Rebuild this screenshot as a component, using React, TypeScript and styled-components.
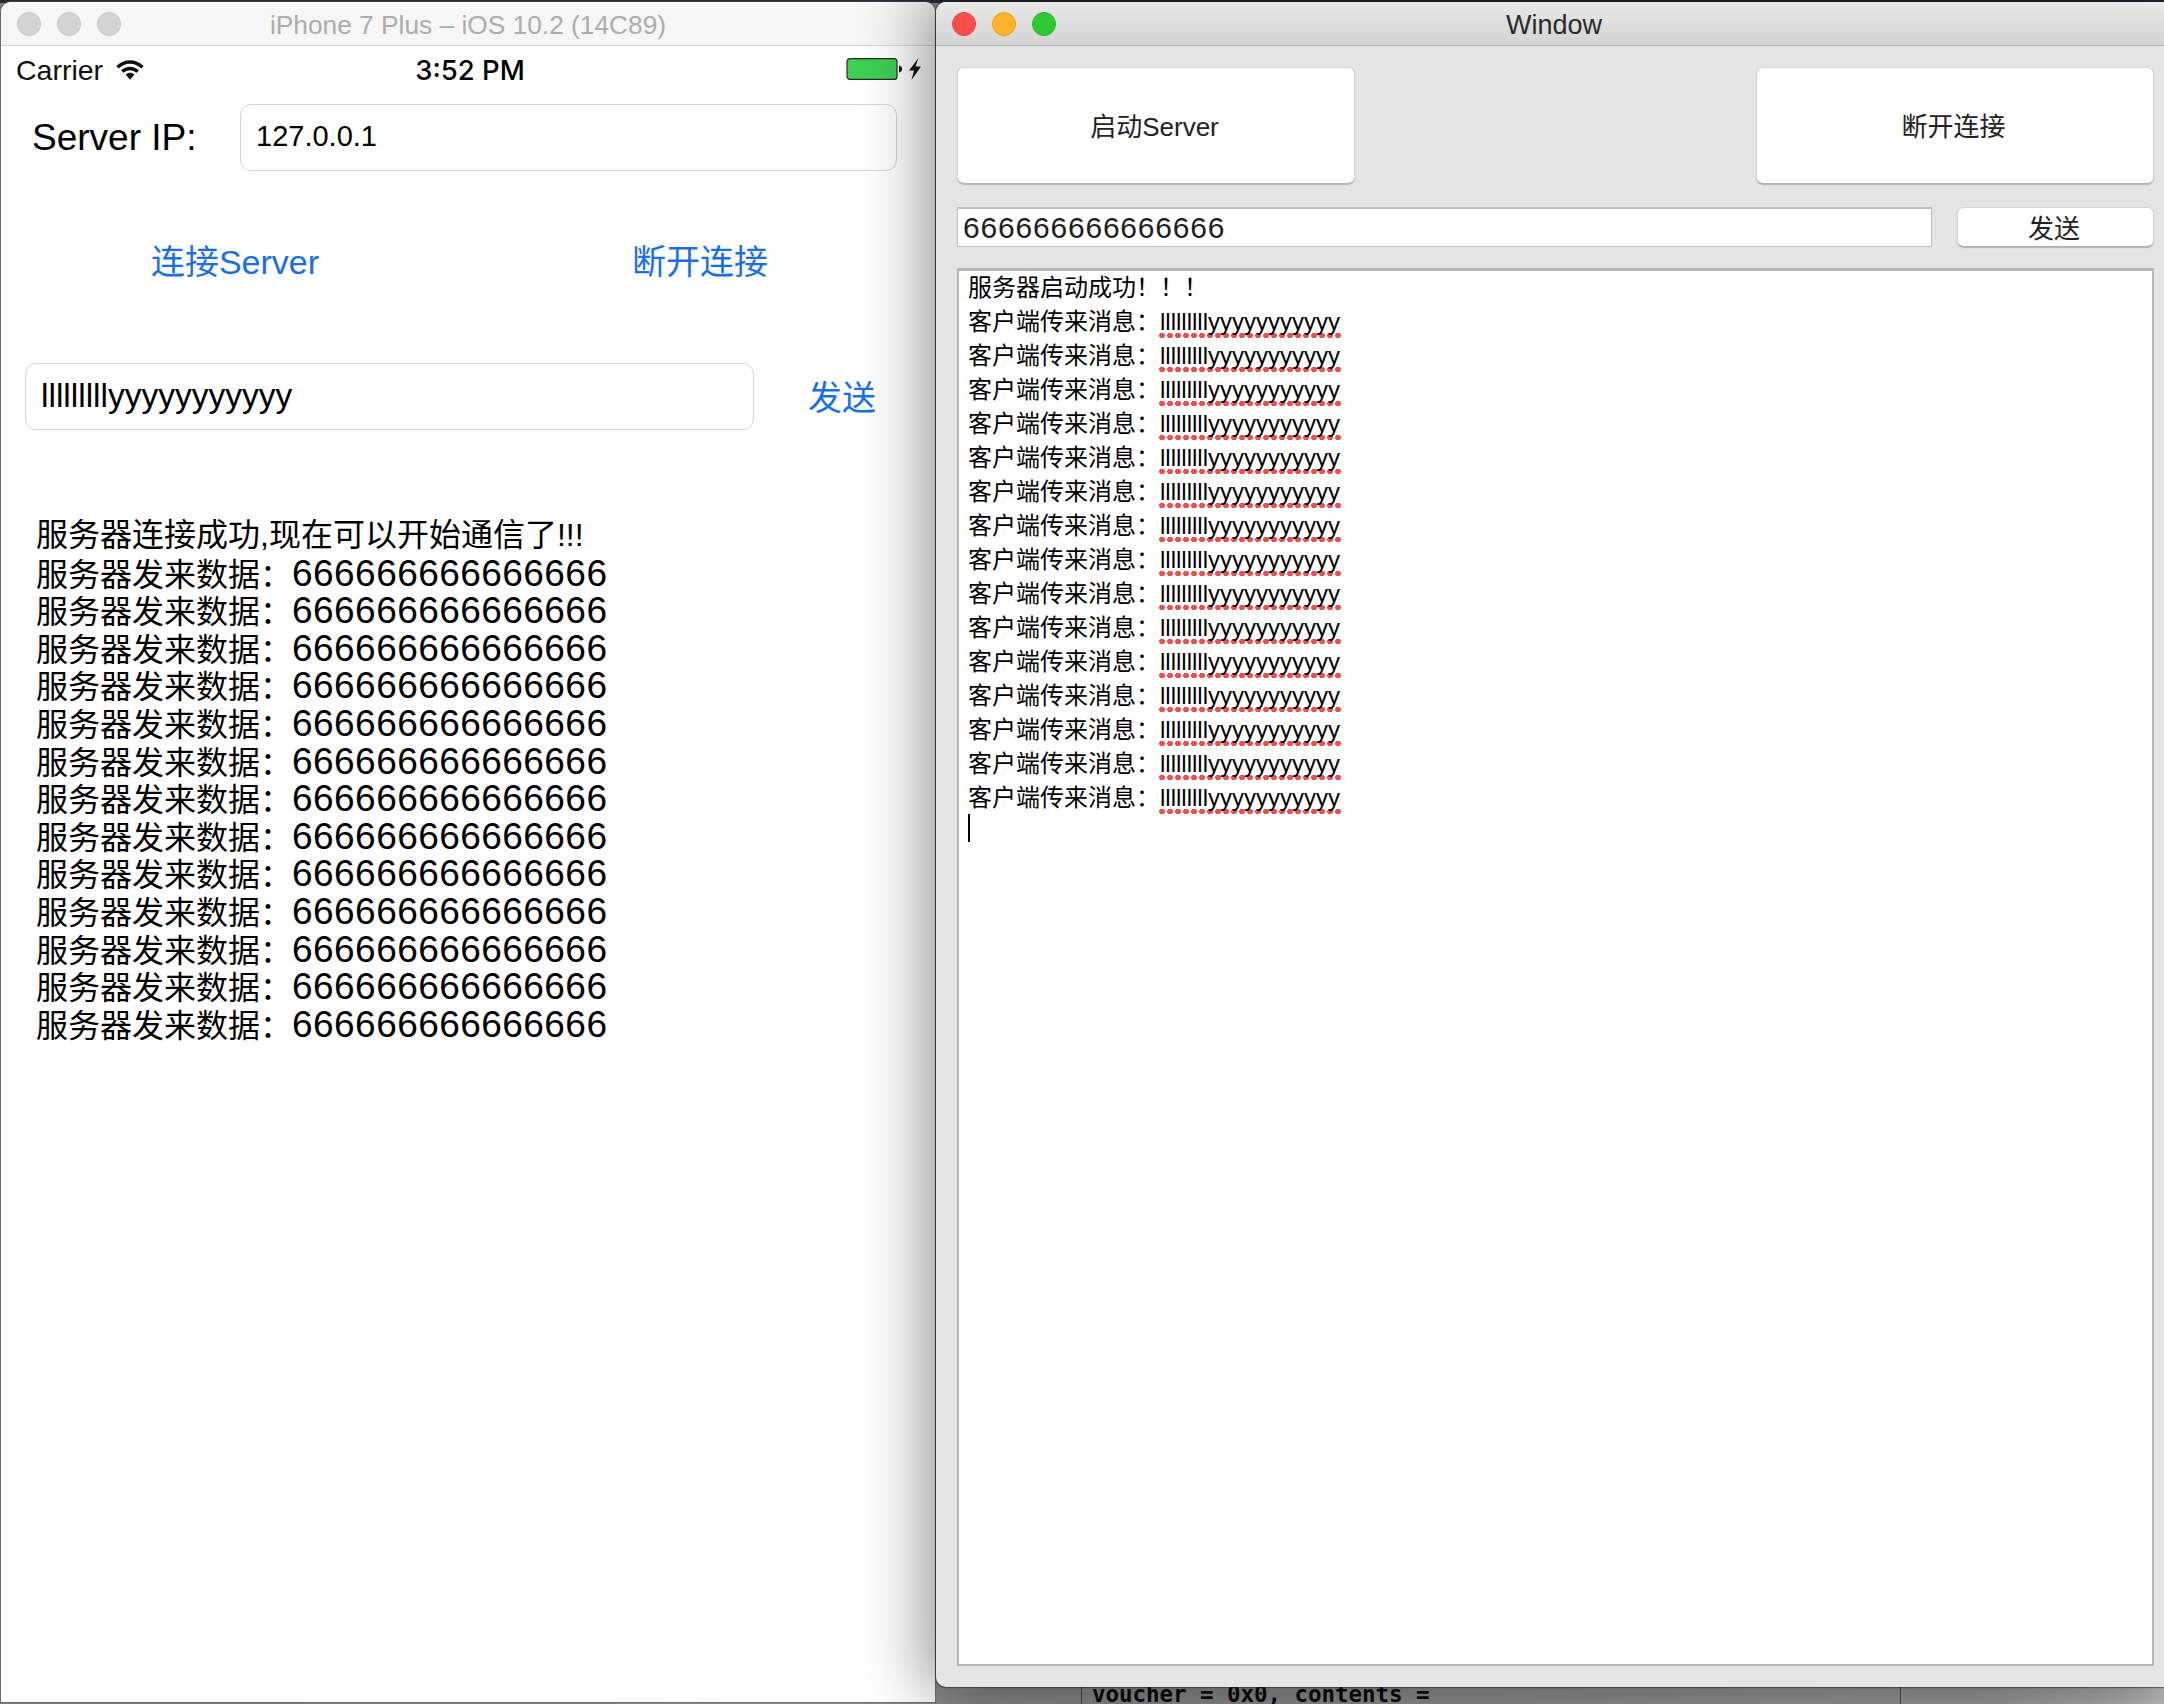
import React from "react";
import styled, { createGlobalStyle } from "styled-components";

const Global = createGlobalStyle`
  html, body { margin: 0; padding: 0; background: #8d8d8d; }
  #root { width: 2164px; height: 1704px; }
  * { box-sizing: border-box; }
`;

const SANS = `"Liberation Sans", "Noto Sans CJK SC", sans-serif`;

const Desktop = styled.div`
  position: relative;
  width: 2164px;
  height: 1704px;
  overflow: hidden;
  font-family: ${SANS};
  color: #000;
  background: linear-gradient(to right, #7f7f7f 0%, #969696 70%, #a2a2a2 92%, #c4c4c4 100%);
  &::before {
    content: "";
    position: absolute;
    inset: 0 0 auto 0;
    height: 3px;
    background: #262b33;
  }
`;

const TerminalBehind = styled.div`
  position: absolute;
  left: 1081px;
  width: 820px;
  bottom: 0;
  height: 40px;
  border-left: 1px solid #4a4a4a;
  border-right: 1px solid #4a4a4a;
  display: flex;
  align-items: flex-end;
  padding: 0 0 3px 10px;
`;

const TerminalLine = styled.pre`
  margin: 0;
  font: bold 22.5px/14px "DejaVu Sans Mono", "Liberation Mono", monospace;
  color: #0b0b0b;
  letter-spacing: -0.05px;
`;

const SimulatorWindow = styled.section`
  position: absolute;
  left: 1px;
  top: 2px;
  width: 934px;
  height: 1700px;
  background: #fff;
  border-radius: 10px 10px 0 0;
  box-shadow: 0 0 1px 1px rgba(90, 90, 90, 0.55);
  display: flex;
  flex-direction: column;
  overflow: hidden;
`;

const MacWindow = styled.section`
  position: absolute;
  left: 936px;
  top: 2px;
  width: 1228px;
  height: 1685px;
  background: #e5e5e5;
  border-radius: 10px 0 0 10px;
  box-shadow: 0 0 66px 8px rgba(0, 0, 0, 0.46), 0 0 1px 1px rgba(40, 40, 40, 0.55);
  display: flex;
  flex-direction: column;
  overflow: hidden;
`;

const TitleBar = styled.header<{ $active?: boolean }>`
  flex: none;
  height: 44px;
  display: grid;
  grid-template-columns: 1fr auto 1fr;
  align-items: center;
  padding: 0 16px;
  background: ${(p) => (p.$active ? "linear-gradient(#e9e9e9, #d3d3d3)" : "#f6f6f6")};
  border-bottom: 1px solid ${(p) => (p.$active ? "#b1b1b1" : "#d4d4d4")};
`;

const Lights = styled.div`
  display: flex;
  gap: 16px;
`;

const Light = styled.span<{ $color: string; $edge: string }>`
  width: 24px;
  height: 24px;
  border-radius: 50%;
  background: ${(p) => p.$color};
  border: 1px solid ${(p) => p.$edge};
`;

const WindowTitle = styled.h1<{ $active?: boolean }>`
  margin: 2px 0 0;
  font-weight: 400;
  font-size: ${(p) => (p.$active ? 27 : 26.3)}px;
  line-height: 42px;
  padding-left: ${(p) => (p.$active ? 8 : 0)}px;
  color: ${(p) => (p.$active ? "#2b2b2b" : "#adadad")};
`;

const StatusBar = styled.div`
  flex: none;
  height: 58px;
  padding: 0 13px 10px 15px;
  display: grid;
  grid-template-columns: 1fr auto 1fr;
  align-items: center;
`;

const StatusLeft = styled.div`
  display: flex;
  align-items: center;
  gap: 13px;
  font-size: 28.5px;
  color: #111;
`;

const StatusTime = styled.div`
  font-family: Inter, "Liberation Sans", sans-serif;
  font-weight: 500;
  font-size: 27.5px;
  margin-left: 2px;
`;

const StatusRight = styled.div`
  display: flex;
  justify-content: flex-end;
`;

const ServerRow = styled.div`
  flex: none;
  display: flex;
  align-items: center;
  padding-left: 31px;
`;

const ServerLabel = styled.label`
  width: 208px;
  font-size: 37px;
`;

const PhoneField = styled.div<{ $width: number; $size: number; $pad: number }>`
  width: ${(p) => p.$width}px;
  height: 67px;
  display: flex;
  align-items: center;
  padding: 0 0 2px ${(p) => p.$pad}px;
  font-size: ${(p) => p.$size}px;
  background: #fff;
  border: 1px solid #d4d4d4;
  border-radius: 11px;
`;

const ActionRow = styled.div`
  flex: none;
  margin-top: 59px;
  height: 62px;
  padding-left: 119px;
  display: flex;
  gap: 235px;
`;

const PhoneButton = styled.button<{ $width: number }>`
  width: ${(p) => p.$width}px;
  padding: 0 0 3px;
  border: 0;
  background: none;
  font-family: ${SANS};
  font-size: 34px;
  color: #1a6fe8;
`;

const SendRow = styled.div`
  flex: none;
  margin-top: 71px;
  padding-left: 24px;
  display: flex;
  align-items: center;
`;

const PhoneLog = styled.div`
  margin-top: 87px;
  padding-left: 35px;
  font-size: 32px;
  line-height: 37.6px;
`;

const PhoneLine = styled.div`
  height: 37.6px;
  white-space: pre;
`;

const PhoneDigits = styled.span`
  font-size: 37px;
  letter-spacing: 0.45px;
`;

const MacBody = styled.div`
  flex: 1;
  min-height: 0;
  padding: 21px 10px 21px 21px;
  display: flex;
  flex-direction: column;
`;

const BigButtons = styled.div`
  flex: none;
  display: flex;
  justify-content: space-between;
`;

const MacButton = styled.button<{ $width: number; $height: number }>`
  width: ${(p) => p.$width}px;
  height: ${(p) => p.$height}px;
  flex: none;
  padding: 0 3px 2px 0;
  background: #fff;
  border: 1px solid #d6d6d6;
  border-bottom-color: #b0b0b0;
  border-radius: 7px;
  box-shadow: 0 1px 1px rgba(0, 0, 0, 0.22);
  font-family: ${SANS};
  font-size: 26px;
  color: #222;
`;

const SendBar = styled.div`
  flex: none;
  margin-top: 23px;
  display: flex;
  justify-content: space-between;
`;

const MacField = styled.div`
  width: 975px;
  height: 40px;
  padding-left: 5px;
  display: flex;
  align-items: center;
  background: #fff;
  border: 2px solid #bdbdbd;
  border-width: 2px 1px 1px 1px;
  font-size: 30px;
  letter-spacing: 0.8px;
  color: #1e1e1e;
`;

const MacLog = styled.div`
  flex: 1;
  min-height: 0;
  margin-top: 21px;
  padding: 0 0 0 9px;
  background: #fff;
  border: 2px solid #b8b8b8;
  border-top-width: 3px;
  font-size: 24px;
  line-height: 34px;
`;

const MacLine = styled.div`
  height: 34px;
  white-space: pre;
`;

const SpellError = styled.span`
  display: inline-block;
  height: 34px;
  margin-left: -2px;
  padding: 0 1px 0 2px;
  background-image: radial-gradient(circle at 4px 2.5px, #f04f4f 2.6px, transparent 3.1px);
  background-size: 8px 5px;
  background-repeat: repeat-x;
  background-position: 0 28px;
`;

const Caret = styled.div`
  width: 2px;
  height: 28px;
  margin-top: -1px;
  background: #000;
`;

const PHONE_ROWS = Array.from({ length: 13 }, (_, i) => i);
const MAC_ROWS = Array.from({ length: 15 }, (_, i) => i);
const SPAM = "lllllllllyyyyyyyyyyy";

const WifiIcon = () => (
  <svg width="28" height="20" viewBox="0 0 28 20" fill="none">
    <path d="M1.500 7.200C9 .2 19 .2 26.500 7.200" stroke="#111" strokeWidth="3.400" />
    <path d="M6.200 11.600c4.600-4.200 11-4.200 15.600 0" stroke="#111" strokeWidth="3.400" />
    <path d="M9.600 14.400c2.800-2.300 6-2.300 8.800 0L14 19.800z" fill="#111" />
  </svg>
);

const BatteryIcon = () => (
  <svg width="76" height="24" viewBox="0 0 76 24">
    <rect x="1" y="0.600" width="50" height="20.800" rx="3" fill="#3ecf55" stroke="#2a2a2a" strokeWidth="1.200" />
    <path d="M53 7.500c2 .4 3 1.800 3 3.500s-1 3.100-3 3.500z" fill="#111" />
    <path d="M72.500 0 63 12.500h5L65.500 22 75 8.500h-5.500z" fill="#111" />
  </svg>
);

export default function App() {
  return (
    <Desktop>
      <Global />
      <TerminalBehind>
        <TerminalLine>voucher = 0x0, contents =</TerminalLine>
      </TerminalBehind>

      <SimulatorWindow>
        <TitleBar>
          <Lights>
            <Light $color="#d3d3d3" $edge="#c6c6c6" />
            <Light $color="#d3d3d3" $edge="#c6c6c6" />
            <Light $color="#d3d3d3" $edge="#c6c6c6" />
          </Lights>
          <WindowTitle>iPhone 7 Plus – iOS 10.2 (14C89)</WindowTitle>
          <span />
        </TitleBar>
        <StatusBar>
          <StatusLeft>
            Carrier
            <WifiIcon />
          </StatusLeft>
          <StatusTime>3:52 PM</StatusTime>
          <StatusRight>
            <BatteryIcon />
          </StatusRight>
        </StatusBar>
        <ServerRow>
          <ServerLabel>Server IP:</ServerLabel>
          <PhoneField $width={657} $size={29} $pad={15}>127.0.0.1</PhoneField>
        </ServerRow>
        <ActionRow>
          <PhoneButton $width={230}>连接Server</PhoneButton>
          <PhoneButton $width={230}>断开连接</PhoneButton>
        </ActionRow>
        <SendRow>
          <PhoneField $width={729} $size={33.5} $pad={15}>{SPAM}</PhoneField>
          <PhoneButton $width={176}>发送</PhoneButton>
        </SendRow>
        <PhoneLog>
          <PhoneLine>服务器连接成功,现在可以开始通信了!!!</PhoneLine>
          {PHONE_ROWS.map((i) => (
            <PhoneLine key={i}>
              服务器发来数据：<PhoneDigits>666666666666666</PhoneDigits>
            </PhoneLine>
          ))}
        </PhoneLog>
      </SimulatorWindow>

      <MacWindow>
        <TitleBar $active>
          <Lights>
            <Light $color="#fc4f49" $edge="#e8443e" />
            <Light $color="#fdb327" $edge="#e6a11f" />
            <Light $color="#2bc934" $edge="#25b32c" />
          </Lights>
          <WindowTitle $active>Window</WindowTitle>
          <span />
        </TitleBar>
        <MacBody>
          <BigButtons>
            <MacButton $width={398} $height={117}>启动Server</MacButton>
            <MacButton $width={398} $height={117}>断开连接</MacButton>
          </BigButtons>
          <SendBar>
            <MacField>666666666666666</MacField>
            <MacButton $width={197} $height={40}>发送</MacButton>
          </SendBar>
          <MacLog>
            <MacLine>服务器启动成功！！！</MacLine>
            {MAC_ROWS.map((i) => (
              <MacLine key={i}>
                客户端传来消息：<SpellError>{SPAM}</SpellError>
              </MacLine>
            ))}
            <Caret />
          </MacLog>
        </MacBody>
      </MacWindow>
    </Desktop>
  );
}
